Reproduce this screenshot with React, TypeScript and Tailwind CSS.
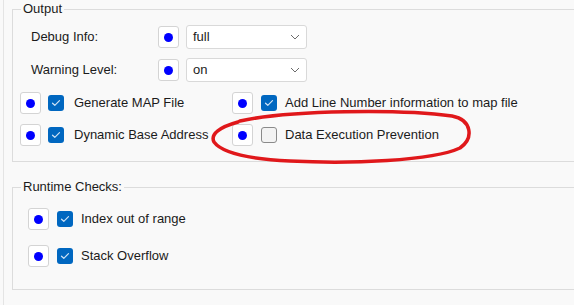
import React from "react";

const font = { fontFamily: '"Liberation Sans", Arial, sans-serif' };

function DotButton() {
  return (
    <div className="flex h-[22px] w-[21px] shrink-0 items-center justify-center rounded-[3px] border border-[#d4d4d4] bg-white">
      <div className="h-[9px] w-[9px] rounded-full bg-[#0000ff]" />
    </div>
  );
}

function CheckBox({ checked }: { checked: boolean }) {
  if (!checked) {
    return <div className="h-[16px] w-[16px] shrink-0 rounded-[3px] border border-[#8a8a8a] bg-[#f3f3f3]" />;
  }
  return (
    <div className="flex h-[16px] w-[16px] shrink-0 items-center justify-center rounded-[3px] bg-[#0067c0]">
      <svg width="10" height="8" viewBox="0 0 10 8" fill="none">
        <path d="M1.5 4.2 L3.8 6.3 L8.5 1.6" stroke="#cfe3f5" strokeWidth="1.2" strokeLinecap="round" strokeLinejoin="round" />
      </svg>
    </div>
  );
}

function Select({ value }: { value: string }) {
  return (
    <div className="flex h-[24px] w-[121px] items-center justify-between rounded-[3px] border border-[#d9d9d9] bg-white pl-[6px] pr-[6px]">
      <span>{value}</span>
      <svg width="10" height="6" viewBox="0 0 10 6" fill="none">
        <path d="M1 1 L5 5 L9 1" stroke="#6b6b6b" strokeWidth="1" />
      </svg>
    </div>
  );
}

function Option({ label, checked, gap = "gap-[8px]", textGap = "ml-[8px]" }: { label: string; checked: boolean; gap?: string; textGap?: string }) {
  return (
    <div className={`flex items-center ${gap}`}>
      <DotButton />
      <CheckBox checked={checked} />
      <span className={textGap}>{label}</span>
    </div>
  );
}

export default function App() {
  return (
    <div className="relative h-[305px] w-[574px] overflow-hidden bg-[#f9f9f9] text-[13px] text-[#1b1b1b]" style={font}>
      <div className="ml-[3px] h-full border-l border-[#e4e4e4] pl-[5px]">
        <fieldset className="ml-[3px] border border-r-0 border-[#dcdcdc] pb-[15px]">
          <legend className="ml-[8px] px-[2px] leading-[18px]">Output</legend>

          <div className="mt-[7px] flex h-[24px] items-center pl-[18px]">
            <span className="w-[127px]">Debug Info:</span>
            <DotButton />
            <div className="ml-[7px]">
              <Select value="full" />
            </div>
          </div>
          <div className="mt-[9px] flex h-[24px] items-center pl-[18px]">
            <span className="w-[127px]">Warning Level:</span>
            <DotButton />
            <div className="ml-[7px]">
              <Select value="on" />
            </div>
          </div>

          <div className="mt-[10px] flex h-[22px] items-center pl-[7px]">
            <div className="w-[212px]">
              <Option label="Generate MAP File" checked gap="gap-[7px]" textGap="ml-[3px]" />
            </div>
            <Option label="Add Line Number information to map file" checked textGap="" />
          </div>
          <div className="mt-[10px] flex h-[22px] items-center pl-[7px]">
            <div className="w-[212px]">
              <Option label="Dynamic Base Address" checked gap="gap-[7px]" textGap="ml-[3px]" />
            </div>
            <Option label="Data Execution Prevention" checked={false} textGap="" />
          </div>
        </fieldset>

        <fieldset className="ml-[3px] mt-[16px] border border-r-0 border-[#dcdcdc] pb-[22px]">
          <legend className="ml-[8px] px-[2px] leading-[18px]">Runtime Checks:</legend>
          <div className="mt-[12px] flex h-[22px] items-center pl-[15px]">
            <Option label="Index out of range" checked textGap="" />
          </div>
          <div className="mt-[15px] flex h-[22px] items-center pl-[15px]">
            <Option label="Stack Overflow" checked textGap="" />
          </div>
        </fieldset>
      </div>

      <svg className="pointer-events-none absolute left-0 top-0" width="574" height="305" viewBox="0 0 574 305" fill="none">
        <path
          d="M240 121 C 290 110, 400 109, 452 116 C 472 120, 474 138, 460 148 C 432 161, 350 164, 290 161 C 250 159, 222 153, 214 142 C 210 134, 220 127, 238 122"
          stroke="#e0181b"
          strokeWidth="3.5"
          strokeLinecap="round"
        />
      </svg>
    </div>
  );
}
